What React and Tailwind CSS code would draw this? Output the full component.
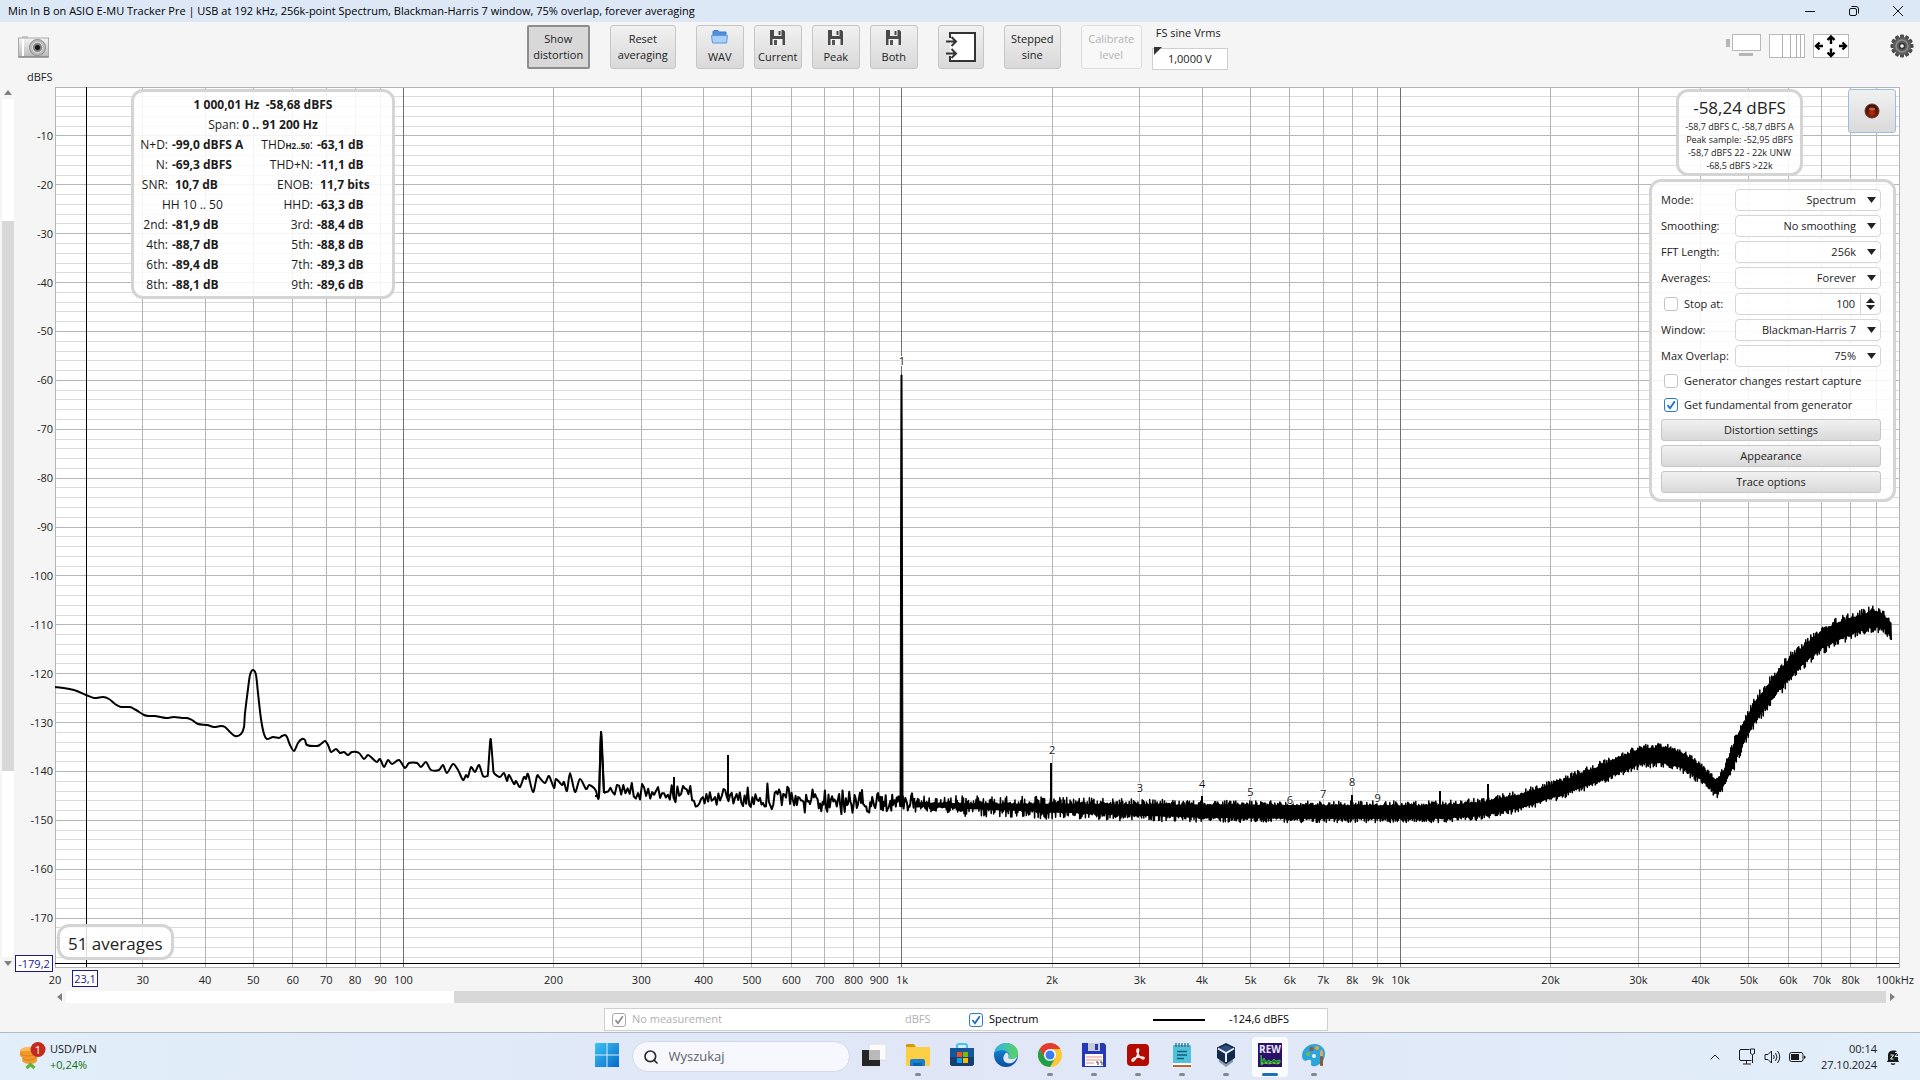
import React from "react";
import { ChevronUp, Search } from "lucide-react";

/* ---------- spectrum data ---------- */

const LOG_SPAN = Math.log10(100000 / 20);
const xPct = (hz) => `${(Math.log10(hz / 20) / LOG_SPAN) * 100}%`;
const yPct = (db) => `${(-db / 180) * 100}%`;

const LOW = [
  [0, 600], [19, 603], [31, 608], [39, 611], [48, 610], [54, 612], [60, 617], [66, 620], [75, 620], [81, 623],
  [89, 628], [94, 629], [100, 629], [111, 631], [119, 630], [127, 631], [132, 631], [137, 633], [143, 637],
  [152, 638], [159, 640], [166, 639], [170, 640], [174, 644], [180, 649], [186, 647], [189, 640], [190, 626],
  [193, 602], [195, 588], [198, 583], [201, 588], [203, 606], [206, 632], [209, 647], [212, 652], [218, 650],
  [224, 651], [227, 649], [230, 648], [232, 650], [235, 658], [239, 664], [243, 656], [247, 652], [250, 653],
  [252, 658], [262, 659], [266, 657], [270, 654], [273, 658], [276, 665], [281, 662], [285, 666], [289, 665],
  [293, 668], [297, 665], [304, 666], [309, 672], [313, 668], [318, 672], [322, 675], [325, 672], [329, 680],
  [333, 673], [337, 677], [344, 673], [350, 681], [354, 676], [362, 676], [366, 680], [371, 675], [376, 683],
  [384, 683], [388, 678], [392, 686], [398, 677], [403, 683], [408, 693], [411, 688], [413, 690], [416, 680],
  [420, 685], [424, 678], [428, 689], [432, 689], [433, 686], [435, 656], [436, 654], [438, 679], [439, 686],
  [445, 690], [449, 686], [452, 694], [454, 688], [459, 697], [461, 694], [465, 700], [469, 690], [471, 692],
  [473, 687], [478, 705], [482, 689], [484, 690], [490, 696], [494, 689], [499, 701], [501, 692], [507, 698],
  [509, 695], [512, 704], [515, 686], [520, 705], [525, 692], [531, 702], [534, 698], [539, 701], [541, 704],
  [544, 709], [546, 645], [549, 706],
];

/* x, centre, half height of the noise band */
const BAND = [
  [551, 702, 9], [576, 704, 8], [620, 707, 10], [646, 709, 11], [706, 712, 12], [796, 715, 11], [846, 717, 9], [906, 719, 9],
  [996, 721, 10], [1086, 723, 10], [1146, 724, 10], [1256, 725, 10], [1386, 725, 10], [1426, 722, 10], [1466, 714, 10],
  [1506, 701, 10], [1546, 686, 11], [1566, 677, 11], [1586, 669, 11], [1606, 668, 12], [1626, 673, 12],
  [1646, 686, 11], [1656, 696, 10], [1662, 700, 10], [1669, 690, 11], [1676, 674, 14], [1688, 646, 15],
  [1699, 626, 14], [1716, 603, 14], [1733, 583, 14], [1749, 567, 13], [1766, 553, 13], [1783, 544, 13],
  [1799, 538, 12], [1818, 532, 12], [1828, 534, 11], [1833, 540, 10], [1835, 542, 11],
];

function bandAt(x) {
  let i = 0;
  while (i < BAND.length - 2 && BAND[i + 1][0] < x) i += 1;
  const [x0, c0, h0] = BAND[i];
  const [x1, c1, h1] = BAND[i + 1];
  const t = (x - x0) / (x1 - x0);
  return [c0 + (c1 - c0) * t, h0 + (h1 - h0) * t];
}

function makeRandom(seed) {
  let s = seed;
  return () => {
    s = (s * 1664525 + 1013904223) % 4294967296;
    return s / 4294967296;
  };
}

function lowPath() {
  let d = `M${LOW[0][0]} ${LOW[0][1]}`;
  for (let i = 0; i < LOW.length - 1; i += 1) {
    const a = LOW[Math.max(0, i - 1)];
    const b = LOW[i];
    const c = LOW[i + 1];
    const e = LOW[Math.min(LOW.length - 1, i + 2)];
    const k = 7;
    d += `C${(b[0] + (c[0] - a[0]) / k).toFixed(1)} ${(b[1] + (c[1] - a[1]) / k).toFixed(1)} ${(c[0] - (e[0] - b[0]) / k).toFixed(1)} ${(c[1] - (e[1] - b[1]) / k).toFixed(1)} ${c[0]} ${c[1]}`;
  }
  return d;
}

const SPLIT = 860;

function sparsePath() {
  const rnd = makeRandom(29);
  let d = "M549 706";
  let x = 551;
  while (x < SPLIT) {
    const [c, h] = bandAt(x);
    d += `L${x.toFixed(1)} ${(c + h * (rnd() + rnd() + rnd() - 1.5)).toFixed(1)}`;
    x += 2.2 - ((x - 551) / (SPLIT - 551)) * 1.4;
  }
  return d;
}

function densePath() {
  const rnd = makeRandom(17);
  let d = "M859 716";
  let x = SPLIT;
  while (x < 1836) {
    const [c, h] = bandAt(x);
    const grow = Math.min(1, (x - SPLIT) / 300);
    const base = 0.15 + 0.45 * grow;
    const spread = 1 - 0.5 * grow;
    const top = c - h * (base + spread * Math.pow(rnd(), 2));
    const bottom = c + h * (base + spread * Math.pow(rnd(), 2));
    d += `L${x.toFixed(1)} ${top.toFixed(1)}L${(x + 0.5).toFixed(1)} ${bottom.toFixed(1)}`;
    x += 1.3 - 0.3 * grow;
  }
  return d;
}

const LOW_D = lowPath();
const SPARSE_D = sparsePath();
const DENSE_D = densePath();

const SPIKES = [
  [619, 690, 712], [673, 668, 710], [996, 676, 720], [1147, 709, 722], [1297, 708, 722], [1385, 704, 722], [1433, 697, 720],
];

const HARMONICS = [
  ["1", 1000, 278], ["2", 2000, 667], ["3", 3000, 705], ["4", 4000, 701], ["5", 5000, 709],
  ["6", 6000, 717], ["7", 7000, 711], ["8", 8000, 699], ["9", 9000, 715],
];

const V_LINES = [];
[10, 100, 1000, 10000].forEach((dec) => {
  for (let m = 1; m < 10; m += 1) {
    const f = dec * m;
    if (f > 20) V_LINES.push({ f, decade: m === 1 });
  }
});

const freqLabel = (f) => (f >= 1000 ? `${f / 1000}k` : `${f}`);

function Spectrum() {
  const minors = [];
  for (let db = -2; db > -180; db -= 2) minors.push(db);
  return (
    <svg className="absolute inset-0 h-full w-full overflow-visible" role="img" aria-label="Spectrum chart">
      <rect width="100%" height="100%" fill="#fff" />
      <g shapeRendering="crispEdges" strokeWidth="1">
        {minors.map((db) => (
          <line key={db} x1="0" x2="100%" y1={yPct(db)} y2={yPct(db)} stroke={db % 10 === 0 ? "#b6b6b6" : "#dadada"} />
        ))}
        {V_LINES.map(({ f, decade }) => (
          <line key={f} x1={xPct(f)} x2={xPct(f)} y1="0" y2="100%" stroke={decade ? "#707070" : "#b4b4b4"} />
        ))}
        <rect width="100%" height="100%" fill="none" stroke="#b4b4b4" />
      </g>
      <svg width="100%" height="100%" viewBox="0 0 1844 880" preserveAspectRatio="none" className="overflow-visible">
        <g fill="none" stroke="#000" strokeLinejoin="round">
          <path d={LOW_D} strokeWidth="2" />
          <path d={SPARSE_D} strokeWidth="2" />
          <path d={DENSE_D} strokeWidth="1.5" />
          <path d={SPIKES.map(([x, a, b]) => `M${x} ${b}V${a}`).join("")} strokeWidth="2" />
          <path d="M540 709L544 709L546 645L549 706" strokeWidth="2" />
          <path d="M845 718L846 288L847 288L848 718Z" fill="#000" strokeWidth="1" />
        </g>
        <g fontSize="11" textAnchor="middle" fill="#111" stroke="#fff" strokeWidth="2" paintOrder="stroke">
          {HARMONICS.map(([n, f, y]) => (
            <text key={n} x={(Math.log10(f / 20) / LOG_SPAN) * 1844} y={y}>{n}</text>
          ))}
        </g>
      </svg>
      <g shapeRendering="crispEdges" stroke="#000" strokeWidth="1">
        <line x1={xPct(23.1)} x2={xPct(23.1)} y1="0" y2="100%" />
        <line x1="0" x2="100%" y1={yPct(-179.2)} y2={yPct(-179.2)} />
      </g>
      <g fontSize="11" fill="#222">
        {minors.filter((db) => db % 10 === 0).map((db) => (
          <text key={db} x="-2" y={yPct(db)} dy="4" textAnchor="end">{db}</text>
        ))}
        <g transform="translate(0 17)">
          <text x="0" y="100%" textAnchor="middle">20</text>
          {V_LINES.filter(({ f }) => f !== 90000).map(({ f }) => (
            <text key={f} x={xPct(f)} y="100%" textAnchor="middle">{freqLabel(f)}</text>
          ))}
          <text x="100%" y="100%" dx="15" textAnchor="end">100kHz</text>
        </g>
      </g>
    </svg>
  );
}

/* ---------- shared pieces ---------- */

const PANEL = "rounded-xl border-[3px] border-[#d4d4d4] bg-white/85";
const BTN = "rounded-[3px] border border-[#c6c6c6] bg-gradient-to-b from-[#f1f1f1] to-[#d9d9d9] text-[#222]";

function Check({ id, label, checked, disabled, className = "" }) {
  return (
    <label htmlFor={id} className={`flex items-center gap-[6px] whitespace-nowrap ${disabled ? "text-[#b0b0b0]" : ""} ${className}`}>
      <span className="relative flex size-[14px] items-center justify-center">
        <input
          id={id}
          type="checkbox"
          defaultChecked={checked}
          disabled={disabled}
          className="peer size-[14px] appearance-none rounded-[3px] border border-[#c4c4c4] bg-white checked:border-[#2b7cc9] disabled:border-[#a8a8a8]"
        />
        <svg viewBox="0 0 14 14" className={`pointer-events-none absolute inset-0 hidden size-[14px] peer-checked:block ${disabled ? "text-[#8f8f8f]" : "text-[#1a6fc4]"}`}>
          <path d="M3.5 7l2.5 3.2L10.8 3.2" fill="none" stroke="currentColor" strokeWidth="1.8" />
        </svg>
      </span>
      {label}
    </label>
  );
}

/* ---------- window title ---------- */

function TitleBar() {
  return (
    <header className="flex h-[22px] shrink-0 items-center justify-between bg-[#dde8f6] pl-2 text-black">
      <h1 className="pt-px text-[11px]">Min In B on ASIO E-MU Tracker Pre | USB at 192 kHz, 256k-point Spectrum, Blackman-Harris 7 window, 75% overlap, forever averaging</h1>
      <div className="flex h-full">
        <button aria-label="Minimize" className="flex w-11 items-center justify-center">
          <svg width="10" height="10"><path d="M0 5.5h10" stroke="#111" /></svg>
        </button>
        <button aria-label="Restore" className="flex w-11 items-center justify-center">
          <svg width="10" height="10" fill="none" stroke="#111"><rect x=".5" y="2.5" width="7" height="7" rx="1.5" /><path d="M2.5 .5h4.5a2.5 2.5 0 0 1 2.5 2.5V7.5" /></svg>
        </button>
        <button aria-label="Close" className="flex w-11 items-center justify-center">
          <svg width="10" height="10" stroke="#111" fill="none"><path d="M0 0L10 10M10 0L0 10" /></svg>
        </button>
      </div>
    </header>
  );
}

/* ---------- toolbar ---------- */

function Camera() {
  return (
    <svg width="31" height="23" viewBox="0 0 31 23">
      <defs>
        <linearGradient id="cam" x1="0" x2="0" y1="0" y2="1"><stop offset="0" stopColor="#f4f4f4" /><stop offset="1" stopColor="#b9b9b9" /></linearGradient>
      </defs>
      <rect x="4" y="1" width="6" height="2" fill="#c9c9c9" />
      <rect x=".5" y="3" width="30" height="19" fill="url(#cam)" stroke="#a9a9a9" />
      <path d="M.5 22h30" stroke="#777" />
      <rect x="4" y="4" width="2" height="17" fill="#fff" />
      <circle cx="19.500" cy="12.500" r="8" fill="#bcbcbc" stroke="#8a8a8a" />
      <circle cx="19.500" cy="12.500" r="5" fill="#7d7d7d" stroke="#e2e2e2" />
      <circle cx="19.500" cy="12.500" r="2.500" fill="#161616" />
    </svg>
  );
}

function FloppyGlyph() {
  return (
    <svg width="15" height="15" viewBox="0 0 15 15">
      <path d="M0 0h13.500L15 1.500V15H0z" fill="#4a4a4a" />
      <rect x="4" width="7.500" height="6" fill="#ececec" />
      <rect x="8.500" y="1" width="2" height="4" fill="#4a4a4a" />
      <rect x="2.500" y="9" width="10" height="6" fill="#f2f2f2" />
      <rect x="4" y="10" width="3" height="5" fill="#555" />
    </svg>
  );
}

function Folder() {
  return (
    <svg width="17" height="14" viewBox="0 0 17 14">
      <path d="M2 1.500L3 .5h4l1 1.500h7V6H2z" fill="#4f90dc" stroke="#3f7cc6" />
      <path d="M.5 5.500h16l-1 7.500h-14z" fill="#a9d0fb" stroke="#5b98de" />
    </svg>
  );
}

function ToolButton({ className = "", children, ...rest }) {
  return (
    <button className={`flex h-11 flex-col items-center justify-center text-[11px] leading-4 ${BTN} ${className}`} {...rest}>
      {children}
    </button>
  );
}

function Toolbar() {
  return (
    <div className="flex h-[65px] shrink-0 text-[#222]">
      <div className="flex grow-[532] basis-0 flex-col justify-between pt-[13px]">
        <button aria-label="Capture image" className="ml-[18px] w-[31px]"><Camera /></button>
        <span className="pl-[27px] text-[11px] leading-[21px]">dBFS</span>
      </div>
      <div className="flex items-start pt-[3px]">
        <button aria-pressed="true" className="mr-5 h-11 w-[63px] rounded-[2px] border-2 border-[#8d8d8d] bg-[#d8d8d8] text-[11px] leading-4">Show<br />distortion</button>
        <ToolButton className="mr-5 w-[66px]">Reset<br />averaging</ToolButton>
        <ToolButton className="mr-[10px] w-12 gap-[5px]"><Folder />WAV</ToolButton>
        <ToolButton className="mr-[10px] w-12 gap-1"><FloppyGlyph />Current</ToolButton>
        <ToolButton className="mr-[10px] w-12 gap-1"><FloppyGlyph />Peak</ToolButton>
        <ToolButton className="mr-5 w-12 gap-1"><FloppyGlyph />Both</ToolButton>
        <ToolButton className="mr-5 w-[46px]" aria-label="Input routing">
          <svg width="30" height="32" viewBox="0 0 30 32" fill="none" stroke="#333" strokeWidth="2">
            <path d="M4 7V2h25v28H4v-5" fill="#fff" />
            <path d="M0 10.500h9M5.500 6l4.500 4.500L5.500 15M0 22.500h9M5.500 18l4.500 4.500L5.500 27" />
          </svg>
        </ToolButton>
        <ToolButton className="mr-5 w-[57px]">Stepped<br />sine</ToolButton>
        <button disabled className="mr-[10px] h-11 w-[61px] rounded-[3px] border border-[#dedede] bg-[#f8f8f8] text-[11px] leading-4 text-[#b4b4b4]">Calibrate<br />level</button>
        <div className="w-[76px]">
          <label htmlFor="vrms" className="block whitespace-nowrap pl-1 text-[11px] leading-4">FS sine Vrms</label>
          <div className="relative mt-1">
            <input id="vrms" defaultValue="1,0000 V" className="h-[22px] w-full border border-[#cfcfcf] bg-white text-center text-[11px]" />
            <svg width="8" height="8" className="absolute left-[2px] top-[2px]"><path d="M0 0h8L0 8z" fill="#333" /></svg>
          </div>
        </div>
      </div>
      <div className="flex grow-[693] basis-0 items-start justify-end gap-2 pr-[6px] pt-3">
        <button aria-label="Scrollbars">
          <svg width="35" height="24" viewBox="0 0 35 24">
            <rect x="0" y="5" width="4" height="8" fill="#b5b5b5" />
            <rect x="6.500" y=".5" width="28" height="16" fill="#fff" stroke="#b9b9b9" />
            <rect x="13" y="19" width="14" height="3" fill="#b5b5b5" />
          </svg>
        </button>
        <button aria-label="Log frequency axis">
          <svg width="36" height="24" viewBox="0 0 36 24">
            <rect x=".5" y=".5" width="35" height="23" fill="#fff" stroke="#b9b9b9" />
            <path d="M13.500 0v24M21.500 0v24M27.500 0v24M31.500 0v24" stroke="#b0b0b0" />
          </svg>
        </button>
        <button aria-label="Graph limits" className="mr-[33px]">
          <svg width="36" height="24" viewBox="0 0 36 24">
            <rect x=".5" y=".5" width="35" height="23" fill="#fff" stroke="#b9b9b9" />
            <path d="M18 10V3M14.500 6L18 2.500L21.500 6M18 14.500v7M14.500 18.500L18 22l3.500-3.500M10 12H3M6.500 8.500L3 12l3.500 3.500M26 12h7M29.500 8.500L33 12l-3.500 3.500" fill="none" stroke="#000" strokeWidth="2.400" />
          </svg>
        </button>
        <button aria-label="Settings">
          <svg width="24" height="24" viewBox="-12 -12 24 24">
            {Array.from({ length: 12 }, (_, i) => (
              <rect key={i} x="-2" y="-11.500" width="4" height="5" rx="1" fill="#4b4b4b" transform={`rotate(${i * 30})`} />
            ))}
            <circle r="9" fill="#5d5d5d" />
            <circle r="6" fill="none" stroke="#8c8c8c" strokeWidth="1.500" />
            <circle r="2.500" fill="#fff" stroke="#333" strokeWidth="1.500" />
          </svg>
        </button>
      </div>
    </div>
  );
}

/* ---------- overlay panels ---------- */

const DIST = [
  ["N+D:", "-99,0 dBFS A", "THD", "-63,1 dB"],
  ["N:", "-69,3 dBFS", "THD+N:", "-11,1 dB"],
  ["SNR:", " 10,7 dB", "ENOB:", " 11,7 bits"],
  ["HH 10 .. 50", null, "HHD:", "-63,3 dB"],
  ["2nd:", "-81,9 dB", "3rd:", "-88,4 dB"],
  ["4th:", "-88,7 dB", "5th:", "-88,8 dB"],
  ["6th:", "-89,4 dB", "7th:", "-89,3 dB"],
  ["8th:", "-88,1 dB", "9th:", "-89,6 dB"],
];

function DistortionPanel() {
  return (
    <div className={`absolute left-[76px] top-[2px] h-[210px] w-[264px] pt-[3px] text-[12px] text-[#1c1c1c] ${PANEL}`}>
      <p className="h-5 whitespace-pre text-center font-bold leading-5">{"1 000,01 Hz  -58,68 dBFS"}</p>
      <p className="h-5 text-center leading-5">Span: <b>0 .. 91 200 Hz</b></p>
      <table className="w-full table-fixed">
        <colgroup><col className="w-[34px]" /><col className="w-[79px]" /><col className="w-[66px]" /><col /></colgroup>
        <tbody>
          {DIST.map(([a, b, c, d]) => (
            <tr key={a} className="h-5 whitespace-nowrap leading-5">
              {b === null ? (
                <td colSpan={2} className="pl-7">{a}</td>
              ) : (
                <>
                  <td className="text-right">{a}</td>
                  <td className="whitespace-pre pl-1 font-bold">{b}</td>
                </>
              )}
              <td className="text-right">{c === "THD" ? <>THD<b className="text-[8px] leading-none">H2..50</b>:</> : c}</td>
              <td className="whitespace-pre pl-1 font-bold">{d}</td>
            </tr>
          ))}
        </tbody>
      </table>
    </div>
  );
}

function SelectRow({ id, label, value }) {
  return (
    <div className="flex h-[26px] items-center justify-between">
      <label htmlFor={id} className="whitespace-nowrap">{label}</label>
      <div className="relative w-[146px]">
        <select id={id} defaultValue={value} className="h-[22px] w-full appearance-none rounded border border-[#d6d6d6] bg-white/70 pr-6 [text-align-last:right]">
          <option>{value}</option>
        </select>
        <svg width="9" height="6" className="pointer-events-none absolute right-[5px] top-2"><path d="M0 0h9L4.500 6z" fill="#222" /></svg>
      </div>
    </div>
  );
}

function SidePanels() {
  return (
    <div className="absolute right-[3px] top-[2px] flex flex-col items-end gap-[3px]">
      <div className="flex gap-[45px]">
        <div className={`h-[87px] w-[127px] text-center text-[#222] ${PANEL}`}>
          <p className="pt-1 text-[17px] leading-6">-58,24 dBFS</p>
          <div className="text-[9px] leading-[13px]">
            <p>-58,7 dBFS C, -58,7 dBFS A</p>
            <p>Peak sample: -52,95 dBFS</p>
            <p>-58,7 dBFS 22 - 22k UNW</p>
            <p>-68,5 dBFS &gt;22k</p>
          </div>
        </div>
        <button aria-label="Record" className="flex h-11 w-12 items-center justify-center rounded-[3px] border border-[#9dbbe6] bg-gradient-to-b from-[#f1f1f1] to-[#dadada]">
          <svg width="16" height="16" viewBox="0 0 16 16">
            <defs><radialGradient id="rec" cy=".65"><stop offset="0" stopColor="#a83a12" /><stop offset=".6" stopColor="#7c1500" /><stop offset="1" stopColor="#4a0d00" /></radialGradient></defs>
            <circle cx="8" cy="8" r="7" fill="url(#rec)" stroke="#5a3a34" />
            <ellipse cx="8" cy="6" rx="3" ry="1.500" fill="#c8836c" opacity=".7" />
          </svg>
        </button>
      </div>
      <form className={`w-[247px] pl-[9px] pr-3 pt-[5px] pb-1 text-[11px] text-[#222] ${PANEL}`}>
        <SelectRow id="mode" label="Mode:" value="Spectrum" />
        <SelectRow id="smoothing" label="Smoothing:" value="No smoothing" />
        <SelectRow id="fft" label="FFT Length:" value="256k" />
        <SelectRow id="averages" label="Averages:" value="Forever" />
        <div className="flex h-[26px] items-center justify-between">
          <Check id="stop" label="Stop at:" className="pl-[3px]" />
          <div className="flex h-[22px] w-[146px] rounded border border-[#d6d6d6] bg-white/70">
            <input aria-label="Stop at count" defaultValue="100" className="w-0 grow bg-transparent pr-[5px] text-right" />
            <div className="flex w-5 flex-col items-center justify-center gap-[2px] border-l border-[#d6d6d6]">
              <button type="button" aria-label="Increase"><svg width="9" height="5" className="block"><path d="M0 5h9L4.500 0z" fill="#222" /></svg></button>
              <button type="button" aria-label="Decrease"><svg width="9" height="5" className="block"><path d="M0 0h9L4.500 5z" fill="#222" /></svg></button>
            </div>
          </div>
        </div>
        <SelectRow id="window" label="Window:" value="Blackman-Harris 7" />
        <SelectRow id="overlap" label="Max Overlap:" value="75%" />
        <Check id="restart" label="Generator changes restart capture" checked={false} className="h-6 pl-[3px]" />
        <Check id="fundamental" label="Get fundamental from generator" checked className="h-6 pl-[3px]" />
        <div className="flex flex-col gap-1 pb-[2px] pt-[2px]">
          <button type="button" className={`h-[22px] ${BTN}`}>Distortion settings</button>
          <button type="button" className={`h-[22px] ${BTN}`}>Appearance</button>
          <button type="button" className={`h-[22px] ${BTN}`}>Trace options</button>
        </div>
      </form>
    </div>
  );
}

/* ---------- graph area ---------- */

function Graph() {
  return (
    <main className="flex min-h-0 grow flex-col">
      <div className="flex min-h-0 grow">
        <div className="flex w-[55px] shrink-0">
          <div className="ml-[2px] flex w-3 flex-col items-center justify-between pb-[1px] pt-[3px]">
            <svg width="8" height="5"><path d="M0 5h8L4 0z" fill="#808080" /></svg>
            <div className="my-1 flex w-full grow flex-col bg-white">
              <div className="grow-[122]" />
              <div className="grow-[550] bg-[#d8d8d8]" />
              <div className="grow-[186]" />
            </div>
            <svg width="8" height="5"><path d="M0 0h8L4 5z" fill="#808080" /></svg>
          </div>
        </div>
        <div className="relative grow">
          <Spectrum />
          <DistortionPanel />
          <SidePanels />
          <div className={`absolute bottom-[7px] left-[2px] flex h-9 items-center px-2 pt-[3px] text-[17px] text-[#222] ${PANEL}`}>51 averages</div>
          <output className="absolute -bottom-[5px] right-full mr-[2px] h-[17px] w-[38px] border border-[#1a1a8c] bg-white text-center text-[11px] leading-[15px] text-[#1a1a8c]">-179,2</output>
          <output className="absolute -bottom-5 left-[17px] h-[17px] w-[26px] border border-[#1a1a8c] bg-white text-center text-[11px] leading-[15px] text-[#1a1a8c]">23,1</output>
        </div>
        <div className="w-[21px] shrink-0" />
      </div>
      <div className="h-6 shrink-0" />
      <div className="flex h-3 shrink-0 items-center pl-[57px] pr-[25px]">
        <svg width="5" height="8"><path d="M5 0v8L0 4z" fill="#808080" /></svg>
        <div className="mx-1 flex h-full grow bg-white">
          <div className="grow-[388]" />
          <div className="grow-[1432] bg-[#d8d8d8]" />
        </div>
        <svg width="5" height="8"><path d="M0 0v8L5 4z" fill="#808080" /></svg>
      </div>
      <div className="flex h-[29px] shrink-0 items-center justify-center pl-3 pt-1 text-[11px]">
        <div className="flex h-[23px] w-[724px] items-center border border-[#cfcfcf] bg-white px-[7px] text-black">
          <Check id="none" label="No measurement" checked disabled className="w-[293px]" />
          <span className="w-[64px] text-[#b0b0b0]">dBFS</span>
          <Check id="spec" label="Spectrum" checked className="w-[184px]" />
          <svg width="52" height="2"><path d="M0 1h52" stroke="#000" strokeWidth="2" /></svg>
          <span className="ml-6">-124,6 dBFS</span>
        </div>
      </div>
    </main>
  );
}

/* ---------- taskbar ---------- */

function TaskButton({ label, running, active, children }) {
  return (
    <button aria-label={label} className={`flex h-10 w-11 flex-col items-center ${active ? "px-[3px]" : ""}`}>
      <span className={`flex h-10 flex-col items-center ${active ? "w-[36px] rounded bg-white/80" : ""}`}>
        <span className="flex h-[36px] items-center">{children}</span>
        {running && <span className={active ? "h-[3px] w-4 rounded-full bg-[#1a6fb8]" : "h-[3px] w-[6px] rounded-full bg-[#85888f]"} />}
      </span>
    </button>
  );
}

function Widgets() {
  return (
    <button className="flex items-center gap-1 pl-[18px] text-left text-[11px] leading-4 text-[#1a1a1a]">
      <svg width="28" height="30" viewBox="0 0 28 30">
        <ellipse cx="10" cy="9" rx="8" ry="4" fill="#fbb858" />
        <path d="M2 9v5l3 2l-1 3c3 4 13 4 15 0V9z" fill="#f19a2c" />
        <path d="M2 11c3 4 13 4 17 0M4 16c4 3 11 3 14-1" fill="none" stroke="#d97e1c" />
        <path d="M8.500 26L12.500 22.500l4 3.500" fill="none" stroke="#5bb531" strokeWidth="3" />
        <circle cx="20" cy="7.500" r="7.500" fill="#c42b1c" />
        <text x="20" y="11.500" fontSize="11" textAnchor="middle" fill="#fff">1</text>
      </svg>
      <span>USD/PLN<br /><span className="text-[#11700f]">+0,24%</span></span>
    </button>
  );
}

function Taskbar() {
  return (
    <footer className="grid h-12 shrink-0 grid-cols-[1fr_auto_1fr] items-center border-t border-[#b3bac6] bg-gradient-to-r from-[#e2eefa] via-[#e0e6f6] to-[#e2eefa]">
      <Widgets />
      <nav className="flex items-center">
        <TaskButton label="Start">
          <svg width="24" height="24" viewBox="0 0 24 24">
            <defs><linearGradient id="win" x1="0" y1="0" x2="1" y2="1"><stop offset="0" stopColor="#3cc5f4" /><stop offset="1" stopColor="#0668c9" /></linearGradient></defs>
            <path d="M1 0H11.500V11.500H0V1zM12.500 0H24V11.500H12.500zM0 12.500H11.500V24H0zM12.500 12.500H24V24H12.500z" fill="url(#win)" />
          </svg>
        </TaskButton>
        <label className="ml-[3px] mr-[2px] flex h-[31px] w-[218px] items-center gap-[10px] rounded-full border border-[#d3d9e8] bg-[#f6f8fd] pl-[10px] text-[#5c5f66]">
          <Search size={16} strokeWidth={2.5} color="#2b2b2b" />
          <input type="search" aria-label="Search" placeholder="Wyszukaj" className="w-32 bg-transparent text-[13px] placeholder:text-[#5c5f66]" />
        </label>
        <TaskButton label="Task view">
          <svg width="24" height="24" viewBox="0 0 24 24"><path d="M7 1h17v16H7z" fill="#fbfbfb" stroke="#dedede" /><path d="M0 7h18v16H0z" fill="#262626" /><path d="M7 7h11v10H7z" fill="#b9b9b9" /></svg>
        </TaskButton>
        <TaskButton label="File Explorer" running>
          <svg width="26" height="24" viewBox="0 0 26 24"><path d="M1 2q0-1 1-1h7l2 3H1z" fill="#d19a16" /><path d="M1 4h23q1 0 1 1v17q0 1-1 1H2q-1 0-1-1z" fill="#fccf45" /><path d="M5 23v-5q0-2 2-2h11q2 0 2 2v5z" fill="#1b7fcf" /><path d="M8 20h9v3H8z" fill="#0c62a8" /></svg>
        </TaskButton>
        <TaskButton label="Store">
          <svg width="24" height="24" viewBox="0 0 24 24"><path d="M7 6V3q0-2 2-2h6q2 0 2 2v3" fill="none" stroke="#3cc8f2" strokeWidth="2" /><path d="M0 5h24v15q0 3-3 3H3q-3 0-3-3z" fill="#14569a" /><path d="M0 14h24v6q0 3-3 3H3q-3 0-3-3z" fill="#163f70" /><rect x="7" y="9" width="5" height="5" fill="#f25022" /><rect x="13" y="9" width="5" height="5" fill="#7fba00" /><rect x="7" y="15" width="5" height="5" fill="#00a4ef" /><rect x="13" y="15" width="5" height="5" fill="#ffb900" /></svg>
        </TaskButton>
        <TaskButton label="Edge">
          <svg width="24" height="24" viewBox="0 0 24 24">
            <defs>
              <linearGradient id="eg" x1="0" x2="1"><stop offset="0" stopColor="#2bb5e8" /><stop offset="1" stopColor="#5bd35f" /></linearGradient>
              <linearGradient id="eb" x1="0" y1="0" x2="0" y2="1"><stop offset="0" stopColor="#1590dc" /><stop offset="1" stopColor="#0b4f9e" /></linearGradient>
            </defs>
            <circle cx="12" cy="12" r="12" fill="url(#eb)" />
            <path d="M.5 10C1.500 4 6 0 12 0c7 0 12 4.500 12 10c0 4-3 6-6.500 6c-2.500 0-3.500-1-3-2c1.500-3-.5-6-4.500-6.500C6 7 2 8 .5 10z" fill="url(#eg)" />
            <path d="M14.500 14c-.5 1 .5 2 3 2c2 0 4-.5 5.300-2.500c.7 1-1.800 5.500-5.300 6.500c-5 1.500-9-2-8-6c.3-2 1.500-3.500 3-4.500c2 1 2.500 3 2 4.500z" fill="#e0e6f6" />
          </svg>
        </TaskButton>
        <TaskButton label="Chrome" running>
          <svg width="24" height="24" viewBox="0 0 24 24">
            <circle cx="12" cy="12" r="12" fill="#fcc934" />
            <path d="M1.600 6A12 12 0 0 1 22.400 6H12L6.800 15z" fill="#e33b2e" />
            <path d="M1.600 6A12 12 0 0 0 12 24l5.200-9L12 12L6.800 15z" fill="#1e9e4a" />
            <circle cx="12" cy="12" r="6" fill="#fff" /><circle cx="12" cy="12" r="4.500" fill="#3b7ded" />
          </svg>
        </TaskButton>
        <TaskButton label="Commander" running>
          <svg width="24" height="24" viewBox="0 0 24 24"><path d="M0 0h22l2 2v22H0z" fill="#2438b8" /><rect x="6" width="12" height="8" fill="#c6cbd6" /><rect x="13" y="1" width="3" height="6" fill="#2438b8" /><rect x="3" y="11" width="18" height="12" fill="#fff" /><path d="M4 14h16M4 17h16M4 20h8" stroke="#e28b8b" /><path d="M14 19h2v3M18 19h2v3" stroke="#444" fill="none" /></svg>
        </TaskButton>
        <TaskButton label="Acrobat" running>
          <svg width="22" height="22" viewBox="0 0 22 22"><rect width="22" height="22" rx="4" fill="#b30b00" /><path d="M11 5c-1.500 0-1.500 2 0 5c2 4 5 5.500 6 4.500s-2-2-5.500-1.500S5 15 5 16.500S8 17 10 12s2-7 1-7z" fill="none" stroke="#fff" strokeWidth="1.400" /></svg>
        </TaskButton>
        <TaskButton label="Notepad" running>
          <svg width="20" height="24" viewBox="0 0 20 24"><rect x="1" y="2" width="18" height="19" rx="1" fill="#4fc1da" /><rect x="1" y="20" width="18" height="2" fill="#fff" /><rect x="1" y="22" width="18" height="2" fill="#b9682b" /><path d="M4 0v4M7 0v4M10 0v4M13 0v4M16 0v4" stroke="#27607a" strokeWidth="1.200" /><path d="M5 8.500h10M5 12h10M5 15.500h7" stroke="#15607c" strokeWidth="1.500" /></svg>
        </TaskButton>
        <TaskButton label="VirtualBox" running>
          <svg width="20" height="24" viewBox="0 0 20 24"><path d="M3 16l7 4 7-4v3l-7 5-7-5z" fill="#8d9bb0" /><path d="M10 0L19 4.500V15L10 21L1 15V4.500z" fill="#12294b" /><path d="M3.500 5L10 2l6.500 3L10 8.500z" fill="#2c4f80" /><path d="M2 5.500L10 10l8-4.500M10 10v9" fill="none" stroke="#e6edf7" strokeWidth="2" /></svg>
        </TaskButton>
        <TaskButton label="REW" running active>
          <svg width="24" height="24" viewBox="0 0 24 24"><rect width="24" height="24" fill="#2b0f6b" /><text x="12" y="10" fontSize="10" fontWeight="bold" textAnchor="middle" fill="#e8e8f4">REW</text><path d="M3 22V12l1 6 2-3 2 4 3-2 2 2 3-3 2 2 4-1v3l-3 1-4-1-4 1-4-1z" fill="#1f7a3a" stroke="#37d03f" strokeWidth=".8" /><path d="M3 20h18" stroke="#b7d334" strokeDasharray="2 2" /></svg>
        </TaskButton>
        <TaskButton label="Paint" running>
          <svg width="24" height="24" viewBox="0 0 24 24"><path d="M13 1C5 1 0 7 0 13c0 4 3 6 6 4c2-1 4 0 3 3c-1 4 4 4 7 2c5-2 7-7 7-12S18 1 13 1z" fill="#2aa5dd" /><circle cx="6" cy="11" r="2" fill="#78b843" /><circle cx="9.500" cy="6" r="2.200" fill="#8f5a34" /><circle cx="15" cy="5" r="2" fill="#f0a52e" /><circle cx="12" cy="13" r="2" fill="#e9f2fb" /><path d="M18 14V9l1.500-3L21 9v5z" fill="#e0a760" /><rect x="18" y="13" width="3" height="10" rx="1" fill="#8c5a33" /></svg>
        </TaskButton>
      </nav>
      <div className="flex items-center justify-end pr-5 text-[#1a1a1a]">
        <button aria-label="Hidden icons" className="mr-4"><ChevronUp size={16} strokeWidth={1.500} /></button>
        <button aria-label="Network" className="mr-2">
          <svg width="17" height="17" viewBox="0 0 17 17" fill="none" stroke="#1a1a1a"><path d="M10.500 1.500H2q-1.500 0-1.500 1.500v8q0 1.500 1.500 1.500h10.500M7.500 12.500v3.500M4 16h8" /><path d="M11.500 1h4v4.500q-2 2-4 0zM13.500 7v8" /></svg>
        </button>
        <button aria-label="Volume" className="mr-2">
          <svg width="17" height="16" viewBox="0 0 17 16" fill="none" stroke="#1a1a1a"><path d="M1 5.500h3L7.500 2v12L4 10.500H1zM9.500 6q1.500 2 0 4M11.500 4q3 4 0 8M13.500 2q4.500 6 0 12" /></svg>
        </button>
        <button aria-label="Battery" className="mr-[15px]">
          <svg width="17" height="12" viewBox="0 0 17 12"><rect x=".5" y="1.500" width="13.500" height="9" rx="2" fill="none" stroke="#1a1a1a" /><rect x="2" y="3" width="8" height="6" fill="#1a1a1a" /><path d="M15 4.500l1.500 1v1.500l-1.500 1z" fill="#1a1a1a" /></svg>
        </button>
        <button className="mr-[9px] text-right text-[11px] leading-4">00:14<br />27.10.2024</button>
        <button aria-label="Notifications">
          <svg width="14" height="16" viewBox="0 0 14 16"><path d="M2 11V6q0-4 4.500-4.500h3L12 4v7l1 2H1z" fill="#1a1a1a" /><path d="M5 14.500q2 1.500 4 0" stroke="#1a1a1a" fill="none" strokeWidth="1.500" /><path d="M4.500 6h3l-3 4h3M9 3.500h3.500l-3.500 4h3.500" stroke="#e2eefa" fill="none" /></svg>
        </button>
      </div>
    </footer>
  );
}

export default function App() {
  return (
    <div className="flex h-screen min-h-[640px] w-full flex-col overflow-hidden bg-[#f5f5f5] font-['Open_Sans',sans-serif]">
      <TitleBar />
      <Toolbar />
      <Graph />
      <Taskbar />
    </div>
  );
}
